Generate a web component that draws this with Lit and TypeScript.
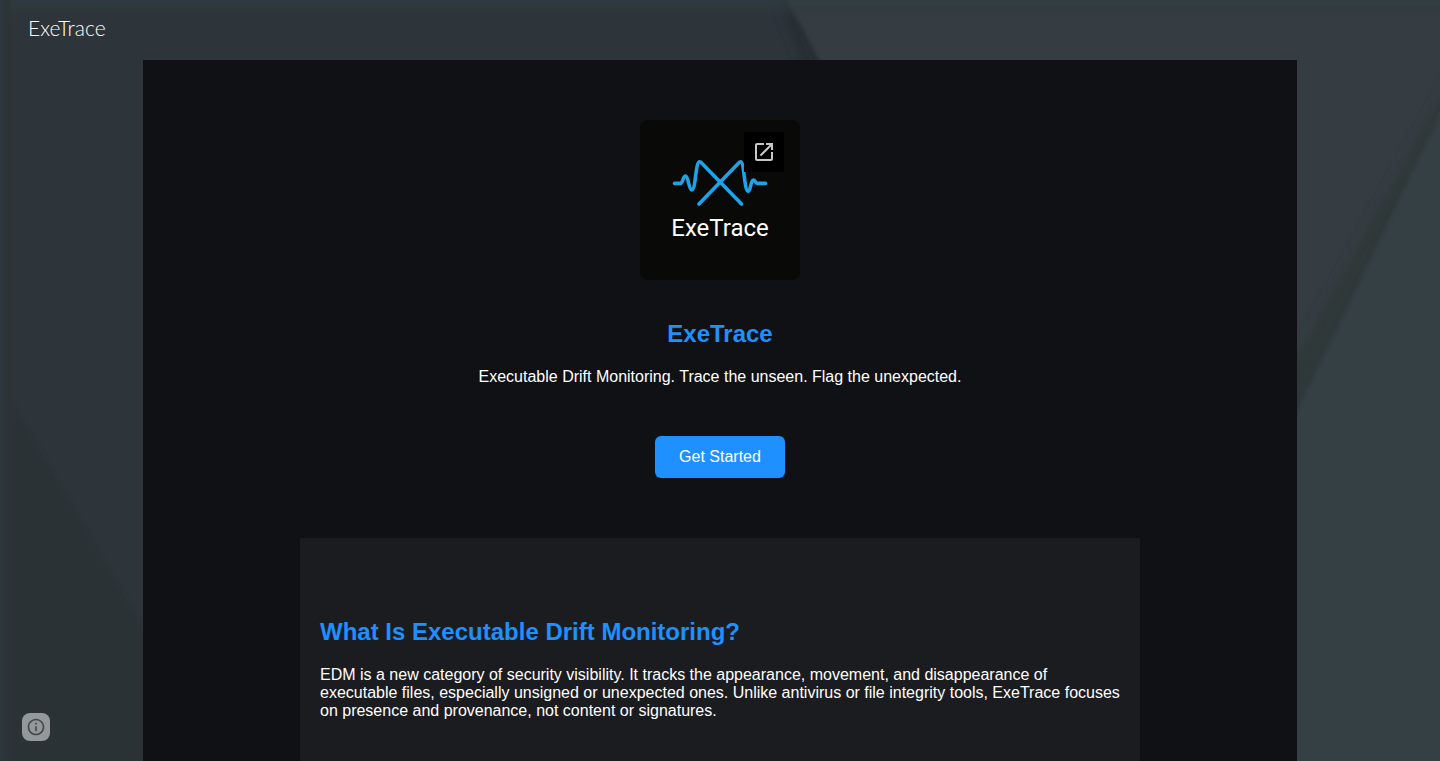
import { LitElement, html, css } from "lit";
import { customElement } from "lit/decorators.js";

@customElement("exe-backdrop")
class ExeBackdrop extends LitElement {
  static styles = css`
    :host {
      position: absolute;
      inset: 0;
      z-index: -1;
    }
    .art {
      display: block;
      width: 100%;
      height: 100%;
    }
  `;

  render() {
    return html`
      <svg class="art" viewBox="0 0 1440 761" preserveAspectRatio="none" aria-hidden="true">
        <defs>
          <filter id="soft" x="-40%" y="-20%" width="180%" height="140%">
            <feGaussianBlur stdDeviation="6" />
          </filter>
          <filter id="crisp" x="-5%" y="-5%" width="110%" height="110%">
            <feGaussianBlur stdDeviation="2" />
          </filter>
          <linearGradient id="top" x1="0" y1="0" x2="0" y2="1">
            <stop offset="0" stop-color="#2f3e46" stop-opacity="0.6" />
            <stop offset="0.25" stop-color="#2f3e46" stop-opacity="0.5" />
            <stop offset="0.45" stop-color="#323939" stop-opacity="0.6" />
            <stop offset="1" stop-color="#323939" stop-opacity="0" />
          </linearGradient>
          <linearGradient id="side" x1="0" y1="0" x2="1" y2="0">
            <stop offset="0" stop-color="#2b363d" />
            <stop offset="0.3" stop-color="#2b353c" />
            <stop offset="0.5" stop-color="#2b3335" />
            <stop offset="1" stop-color="#2b3335" stop-opacity="0" />
          </linearGradient>
        </defs>
        <rect width="1440" height="761" fill="#2d353b" />
        <polygon points="-10,360 8,396 145,632 300,900 -10,900" fill="#2a3134" filter="url(#crisp)" />
        <polygon points="770,-20 790,-20 826,70 804,70" fill="#272e30" filter="url(#soft)" />
        <polygon points="783,-20 1460,-20 1460,800 1200,800 824,68 787,0" fill="#353c42" filter="url(#crisp)" />
        <polygon points="1460,60 1460,85 1280,450 1270,405" fill="#2f3738" filter="url(#soft)" />
        <polygon points="1460,82 1440,116 1297,414 1100,800 1460,800" fill="#353f45" filter="url(#crisp)" />
        <rect width="1440" height="18" fill="url(#top)" />
        <rect width="14" height="761" fill="url(#side)" />
      </svg>
    `;
  }
}

@customElement("exe-logo")
class ExeLogo extends LitElement {
  static styles = css`
    :host {
      display: block;
      position: relative;
      width: 160px;
      height: 160px;
      border-radius: 8px;
      background: #090a08;
      overflow: hidden;
    }
    .mark {
      display: block;
      width: 160px;
      height: 160px;
    }
    .word {
      font: 400 24px Roboto, sans-serif;
      fill: #fff;
    }
    .open {
      position: absolute;
      top: 12px;
      right: 16px;
      display: grid;
      place-items: center;
      width: 40px;
      height: 40px;
      background: #000;
    }
    .open svg {
      width: 24px;
      height: 24px;
      fill: #c7c7c7;
    }
  `;

  render() {
    return html`
      <svg class="mark" viewBox="0 0 160 160" role="img" aria-label="ExeTrace logo">
        <g fill="none" stroke="#1fa3e8" stroke-width="3.6" stroke-linecap="round" stroke-linejoin="round">
          <path d="M34.500 63.400h6c2.200 0 2.600-7.400 5-7.400 3 0 3.200 14 6.300 14 4 0 3.600-28.200 7.800-28.200 1 0 1.700.8 2.500 1.700L101.500 84" />
          <path d="M59 84 98.200 43.500c.8-.9 1.500-1.700 2.500-1.700 3.500 0 3.600 29.400 7.400 29.400 2.800 0 2.500-11.200 5.200-11.200 2 0 2 3.400 4.200 3.400h8" />
        </g>
        <text class="word" x="80" y="116" text-anchor="middle">ExeTrace</text>
      </svg>
      <a class="open" href="#logo" aria-label="Open logo in a new tab">
        <svg viewBox="0 0 24 24" aria-hidden="true">
          <path d="M19 19H5V5h7V3H5c-1.110 0-2 .9-2 2v14c0 1.100.89 2 2 2h14c1.100 0 2-.9 2-2v-7h-2v7zM14 3v2h3.590l-9.830 9.830 1.410 1.410L19 6.410V10h2V3h-7z" />
        </svg>
      </a>
    `;
  }
}

@customElement("app-root")
class AppRoot extends LitElement {
  static styles = css`
    :host {
      position: relative;
      isolation: isolate;
      display: flex;
      flex-direction: column;
      height: 100vh;
      overflow: hidden;
      color: #fff;
      font: 16px/18px "Liberation Sans", Arial, sans-serif;
    }
    .bar {
      display: flex;
      flex: none;
      align-items: center;
      height: 60px;
      box-sizing: border-box;
      padding: 0 28px 4px;
    }
    .brand {
      color: #fff;
      font: 300 21px/24px Lato, sans-serif;
      text-decoration: none;
    }
    .page {
      flex: 1;
      min-height: 0;
      overflow: hidden;
      margin: 0 143px;
      background: #101114;
    }
    .hero {
      display: flex;
      flex-direction: column;
      align-items: center;
      padding: 60px 20px;
      text-align: center;
    }
    h1,
    h2 {
      margin: 0 0 20px;
      color: #1e90ff;
      font-size: 24px;
      line-height: 28px;
    }
    h1 {
      margin-top: 40px;
    }
    p {
      margin: 0;
    }
    .start {
      margin-top: 50px;
      padding: 12px 24px;
      border-radius: 6px;
      background: #1e90ff;
      color: #fff;
      text-decoration: none;
    }
    .about {
      max-width: 800px;
      margin: 0 auto;
      padding: 80px 20px;
      background: #1b1c1f;
    }
    .info {
      position: absolute;
      left: 22px;
      bottom: 20px;
      display: grid;
      place-items: center;
      width: 28px;
      height: 28px;
      padding: 0;
      border: 0;
      border-radius: 8px;
      background: #94989a;
    }
    .info svg {
      width: 20px;
      height: 20px;
      fill: #43494b;
    }
  `;

  render() {
    return html`
      <exe-backdrop></exe-backdrop>
      <header class="bar"><a class="brand" href="#home">ExeTrace</a></header>
      <main class="page">
        <div class="hero">
          <exe-logo></exe-logo>
          <h1>ExeTrace</h1>
          <p>Executable Drift Monitoring. Trace the unseen. Flag the unexpected.</p>
          <a class="start" href="#start">Get Started</a>
        </div>
        <section class="about">
          <h2>What Is Executable Drift Monitoring?</h2>
          <p>
            EDM is a new category of security visibility. It tracks the appearance, movement, and
            disappearance of executable files, especially unsigned or unexpected ones. Unlike
            antivirus or file integrity tools, ExeTrace focuses on presence and provenance, not
            content or signatures.
          </p>
        </section>
      </main>
      <button class="info" type="button" aria-label="Site information">
        <svg viewBox="0 0 24 24" aria-hidden="true">
          <path d="M11 17h2v-6h-2v6zm1-15C6.480 2 2 6.480 2 12s4.480 10 10 10 10-4.480 10-10S17.520 2 12 2zm0 18c-4.410 0-8-3.590-8-8s3.590-8 8-8 8 3.590 8 8-3.590 8-8 8zM11 9h2V7h-2v2z" />
        </svg>
      </button>
    `;
  }
}
